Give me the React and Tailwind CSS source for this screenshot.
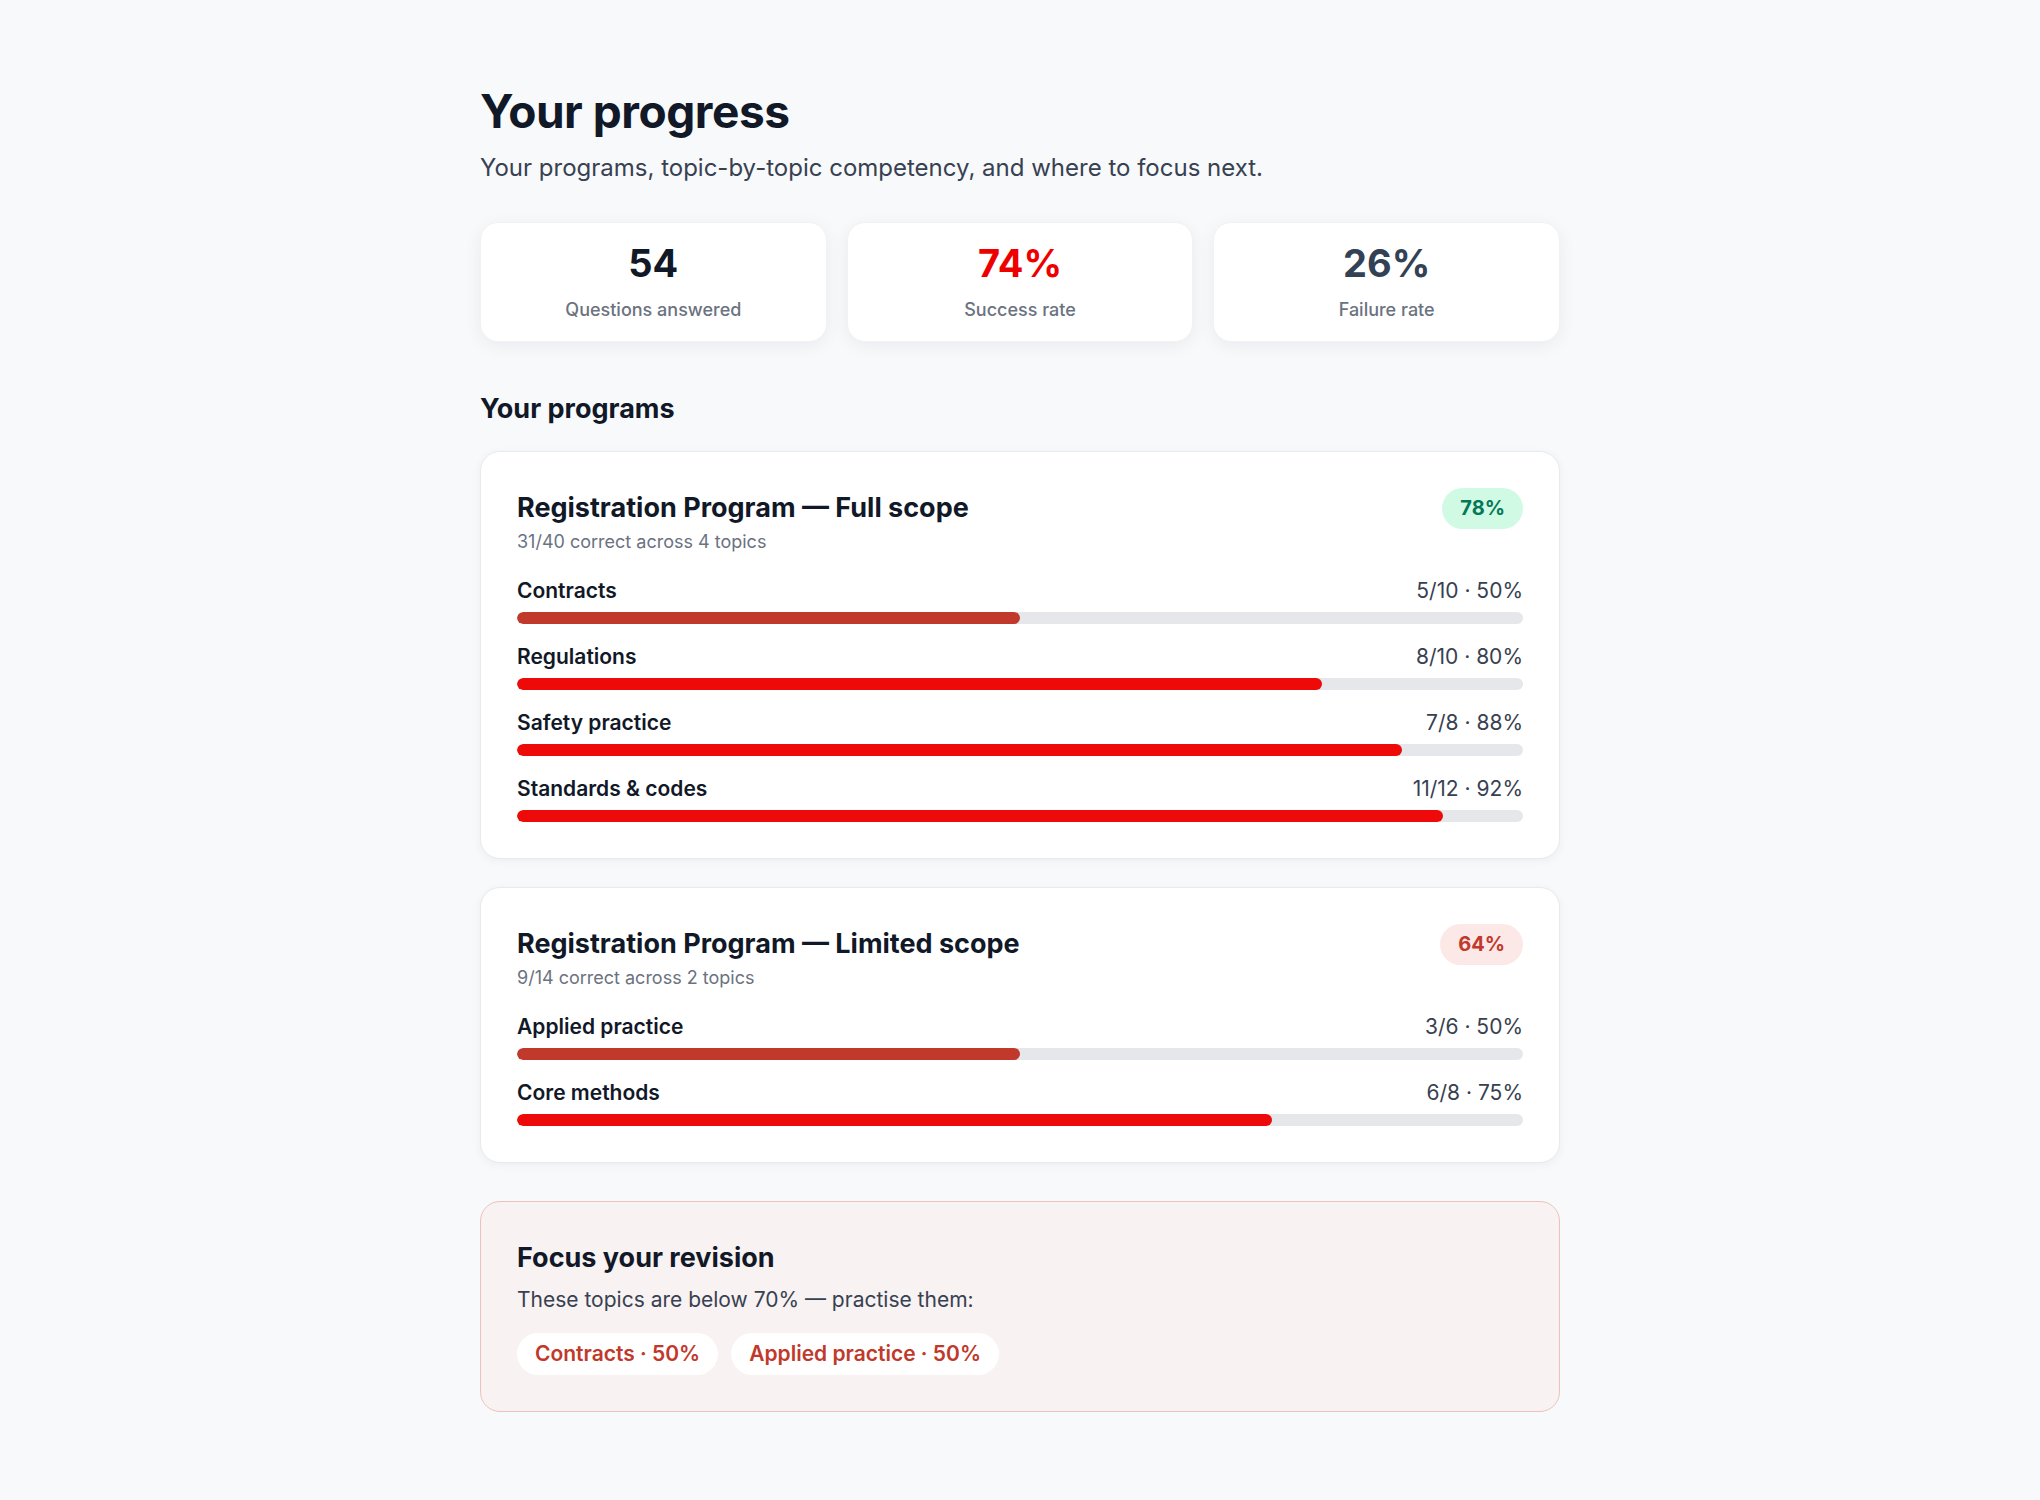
import React from "react";

const programs = [
  {
    title: "Registration Program — Full scope",
    sub: "31/40 correct across 4 topics",
    pct: 78,
    good: true,
    topics: [
      { name: "Contracts", c: 5, t: 10, p: 50 },
      { name: "Regulations", c: 8, t: 10, p: 80 },
      { name: "Safety practice", c: 7, t: 8, p: 88 },
      { name: "Standards & codes", c: 11, t: 12, p: 92 },
    ],
  },
  {
    title: "Registration Program — Limited scope",
    sub: "9/14 correct across 2 topics",
    pct: 64,
    good: false,
    topics: [
      { name: "Applied practice", c: 3, t: 6, p: 50 },
      { name: "Core methods", c: 6, t: 8, p: 75 },
    ],
  },
];

function Stat({ value, label, color }) {
  return (
    <div className="bg-white rounded-[18px] border border-[#f1f2f4] shadow-[0_4px_18px_rgba(17,24,39,0.06)] h-[120px] flex flex-col items-center justify-center">
      <div className={`text-[38px] font-bold leading-[1.2] ${color}`}>{value}</div>
      <div className="text-[18px] font-medium text-[#6b7280] leading-[1.5] mt-[10px]">{label}</div>
    </div>
  );
}

function Topic({ t }) {
  const low = t.p < 70;
  return (
    <div>
      <div className="flex justify-between items-baseline text-[21px] leading-[30px]">
        <span className="font-semibold text-[#111827]">{t.name}</span>
        <span className="text-[#374151]">
          {t.c}/{t.t} · {t.p}%
        </span>
      </div>
      <div className="mt-[6px] h-[12px] rounded-full bg-[#e5e7eb] overflow-hidden">
        <div
          className={`h-full rounded-full ${low ? "bg-[#c0392b]" : "bg-[#ef0a0a]"}`}
          style={{ width: `${t.p}%` }}
        />
      </div>
    </div>
  );
}

function Program({ p }) {
  return (
    <div className="bg-white rounded-[20px] border border-[#e8eaee] shadow-[0_2px_10px_rgba(17,24,39,0.05)] p-9">
      <div className="flex justify-between items-start">
        <div>
          <div className="text-[27px] font-bold text-[#111827] leading-[40px]">{p.title}</div>
          <div className="text-[18px] text-[#6b7280] leading-[1.5]">{p.sub}</div>
        </div>
        <div
          className={`h-[41px] px-[18px] rounded-full flex items-center text-[20px] font-bold ${
            p.good ? "bg-[#d1fae5] text-[#047857]" : "bg-[#fde8e8] text-[#c0392b]"
          }`}
        >
          {p.pct}%
        </div>
      </div>
      <div className="mt-[21px] flex flex-col gap-[18px]">
        {p.topics.map((t) => (
          <Topic key={t.name} t={t} />
        ))}
      </div>
    </div>
  );
}

export default function App() {
  return (
    <div
      className="min-h-screen bg-[#f8f9fb] pb-20"
      style={{ fontFamily: "Inter, 'Noto Sans', sans-serif" }}
    >
      <div className="w-[1080px] mx-auto pt-[84px]">
        <h1 className="text-[46px] font-bold text-[#111827] leading-[1.2] tracking-[-0.01em]">Your progress</h1>
        <p className="mt-[11px] text-[24px] text-[#374151] leading-[1.5]">
          Your programs, topic-by-topic competency, and where to focus next.
        </p>

        <div className="mt-9 grid grid-cols-3 gap-5">
          <Stat value="54" label="Questions answered" color="text-[#111827]" />
          <Stat value="74%" label="Success rate" color="text-[#ee0000]" />
          <Stat value="26%" label="Failure rate" color="text-[#334155]" />
        </div>

        <h2 className="mt-[47px] text-[27px] font-bold text-[#111827] leading-[1.5]">Your programs</h2>

        <div className="mt-[21px] flex flex-col gap-7">
          {programs.map((p) => (
            <Program key={p.title} p={p} />
          ))}
        </div>

        <div className="mt-[38px] rounded-[20px] border border-[#eec2bb] bg-[#f8f2f2] p-9">
          <div className="text-[27px] font-bold text-[#111827] leading-[1.5]">Focus your revision</div>
          <div className="mt-[6px] text-[21px] text-[#374151] leading-[1.5]">
            These topics are below 70% — practise them:
          </div>
          <div className="mt-[17px] flex gap-[13px]">
            {["Contracts · 50%", "Applied practice · 50%"].map((c) => (
              <span
                key={c}
                className="h-[42px] px-[18px] rounded-full bg-white flex items-center text-[21px] font-semibold text-[#c0392b]"
              >
                {c}
              </span>
            ))}
          </div>
        </div>
      </div>
    </div>
  );
}
